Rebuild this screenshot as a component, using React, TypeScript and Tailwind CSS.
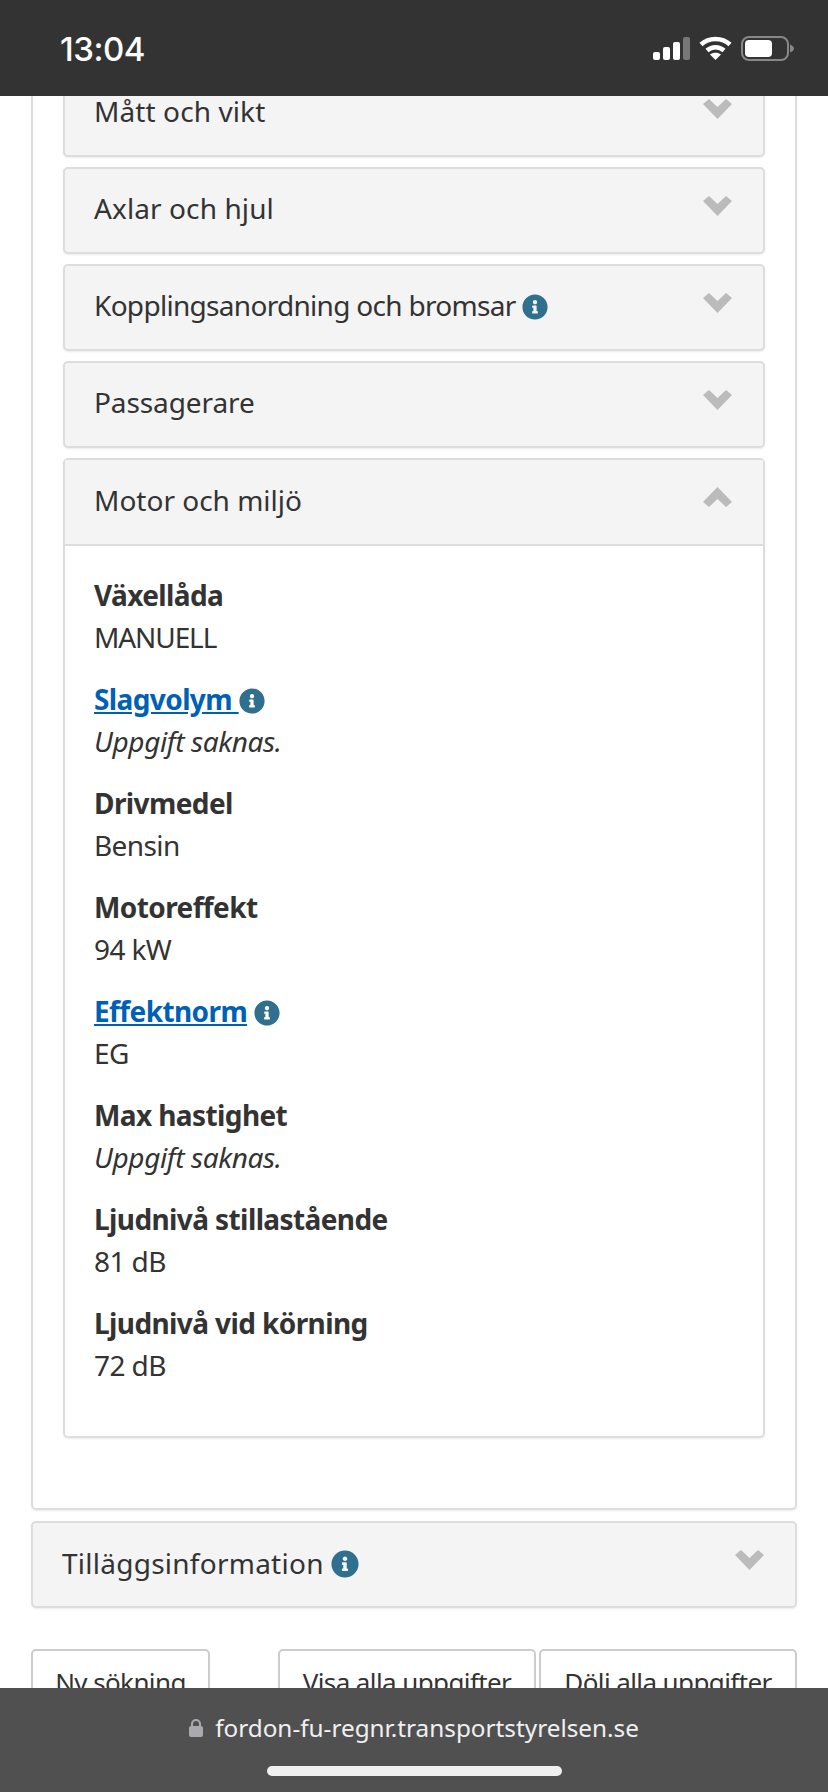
import { FaInfoCircle } from 'react-icons/fa'

function InfoIcon({ big }: { big?: boolean }) {
  return <FaInfoCircle className={`inline-block align-[-4px] text-[#316f8f] ${big ? 'text-[28px]' : 'text-[26px]'}`} />
}

function Chevron({ up }: { up?: boolean }) {
  return (
    <svg width="29" height="20" viewBox="0 0 29 20" className={`mt-[27px] shrink-0 ${up ? 'rotate-180' : ''}`}>
      <path d="M0 5 6 0 14.500 8 23 0 29 5 14.500 20z" fill="#bbb" />
    </svg>
  )
}

function Panel({ title, info, tracking = 'tracking-[0.1px]' }: { title: string; info?: boolean; tracking?: string }) {
  return (
    <div className="mb-[10px] flex h-[87px] items-start justify-between rounded-[5px] border-2 border-[#ddd] bg-[#f4f4f4] pl-[29px] pr-[31px] shadow-[0_1px_2px_rgba(0,0,0,0.08)]">
      <p className={`pt-[18px] text-[28px] leading-[42px] text-[#333] ${tracking}`}>
        {title} {info && <InfoIcon />}
      </p>
      <Chevron />
    </div>
  )
}

const rows = [
  { label: 'Växellåda', value: 'MANUELL', tight: true },
  { label: 'Slagvolym', value: 'Uppgift saknas.', link: true, gap: true, missing: true },
  { label: 'Drivmedel', value: 'Bensin' },
  { label: 'Motoreffekt', value: '94 kW' },
  { label: 'Effektnorm', value: 'EG', link: true },
  { label: 'Max hastighet', value: 'Uppgift saknas.', missing: true },
  { label: 'Ljudnivå stillastående', value: '81 dB' },
  { label: 'Ljudnivå vid körning', value: '72 dB' },
]

export default function App() {
  return (
    <div className='flex h-[1792px] w-[828px] flex-col overflow-hidden bg-white font-["Noto_Sans",sans-serif]'>
      <header className="flex h-[96px] shrink-0 items-center justify-between bg-[#333] pl-[60px] pr-[34px]">
        <span className='pt-[4px] font-["Inter",sans-serif] text-[33px] font-medium tracking-[-0.5px] text-white'>13:04</span>
        <div className="flex items-center gap-[9px]">
          <svg width="37" height="23" viewBox="0 0 37 23">
            <rect x="0" y="15" width="7" height="8" rx="2" fill="#fff" />
            <rect x="10" y="10" width="7" height="13" rx="2" fill="#fff" />
            <rect x="20" y="5" width="7" height="18" rx="2" fill="#fff" />
            <rect x="30" y="0" width="7" height="23" rx="2" fill="#777" />
          </svg>
          <svg width="33" height="24" viewBox="0 0 33 24" fill="none" stroke="#fff" strokeWidth="4.500">
            <path d="M2 8.500c8-7.500 21-7.500 29 0" />
            <path d="M8 14.500c5-4.500 12-4.500 17 0" />
            <path d="M16.500 24l-5.500-5.500c3-2.500 8-2.500 11 0z" fill="#fff" stroke="none" />
          </svg>
          <svg width="53" height="25" viewBox="0 0 53 25">
            <rect x="1" y="1" width="46" height="23" rx="7" fill="none" stroke="#888" strokeWidth="2" />
            <rect x="4" y="4" width="27" height="17" rx="4" fill="#fff" />
            <path d="M49 8.500c2 1 4 2 4 4s-2 3-4 4z" fill="#888" />
          </svg>
        </div>
      </header>

      <main className="min-h-0 flex-1 overflow-hidden px-[31px]">
        <div className="-mt-[26px] rounded-b-[5px] border-2 border-t-0 border-[#ddd] px-[30px] pb-[70px] shadow-[0_1px_2px_rgba(0,0,0,0.08)]">
          <Panel title="Mått och vikt" />
          <Panel title="Axlar och hjul" />
          <Panel title="Kopplingsanordning och bromsar" info tracking="tracking-[-0.7px]" />
          <Panel title="Passagerare" tracking="tracking-[-0.1px]" />

          <section className="rounded-[5px] border-2 border-[#ddd] shadow-[0_1px_2px_rgba(0,0,0,0.08)]">
            <div className="flex h-[86px] items-start justify-between border-b-2 border-[#ddd] bg-[#f4f4f4] pl-[29px] pr-[31px]">
              <p className="pt-[19px] text-[28px] leading-[42px] text-[#333]">Motor och miljö</p>
              <Chevron up />
            </div>
            <div className="pb-[30px] pl-[29px] pr-[30px] pt-[28px]">
              {rows.map((row) => (
                <div key={row.label} className="mb-[20px] text-[28px] leading-[42px] tracking-[-0.6px] text-[#333]">
                  <p className="font-bold">
                    {row.link ? (
                      <a className="text-[#0060b6] underline">
                        {row.label}
                        {row.gap ? ' ' : ''}
                      </a>
                    ) : (
                      row.label
                    )}
                    {row.link && ' '}
                    {row.link && <InfoIcon />}
                  </p>
                  <p className={row.missing ? 'italic tracking-[-0.4px]' : row.tight ? 'tracking-[-1.1px]' : ''}>{row.value}</p>
                </div>
              ))}
            </div>
          </section>
        </div>

        <div className="mt-[11px] flex h-[87px] items-start justify-between rounded-[5px] border-2 border-[#ddd] bg-[#f4f4f4] pl-[29px] pr-[31px] shadow-[0_1px_2px_rgba(0,0,0,0.08)]">
          <p className="pt-[19px] text-[28px] leading-[42px] tracking-[0.25px] text-[#333]">
            Tilläggsinformation <InfoIcon big />
          </p>
          <Chevron />
        </div>

        <div className="mt-[41px] flex items-start justify-between">
          <button className="h-[84px] w-[179px] rounded-[5px] border-2 border-[#ccc] pb-[18px] text-[26px] tracking-[-0.6px] text-[#333]">Ny sökning</button>
          <div className="flex gap-[3px]">
            <button className="h-[84px] w-[258px] rounded-[5px] border-2 border-[#ccc] pb-[18px] text-[26px] tracking-[-0.6px] text-[#333]">Visa alla uppgifter</button>
            <button className="h-[84px] w-[258px] rounded-[5px] border-2 border-[#ccc] pb-[18px] text-[26px] tracking-[-0.6px] text-[#333]">Dölj alla uppgifter</button>
          </div>
        </div>
      </main>

      <footer className="flex h-[104px] shrink-0 flex-col items-center bg-[#505050]">
        <div className="mt-[20px] flex items-center gap-[12px] text-[24.300px] leading-[40px] text-[#f0f0f0]">
          <svg width="14" height="18" viewBox="0 0 14 18">
            <path d="M3 8V5a4 4 0 0 1 8 0v3" fill="none" stroke="#aaaaae" strokeWidth="2" />
            <rect x="0" y="7" width="14" height="11" rx="2" fill="#aaaaae" />
          </svg>
          <span>fordon-fu-regnr.transportstyrelsen.se</span>
        </div>
        <div className="mt-[18px] h-[10px] w-[295px] rounded-full bg-[#f0f0f0]" />
      </footer>
    </div>
  )
}
